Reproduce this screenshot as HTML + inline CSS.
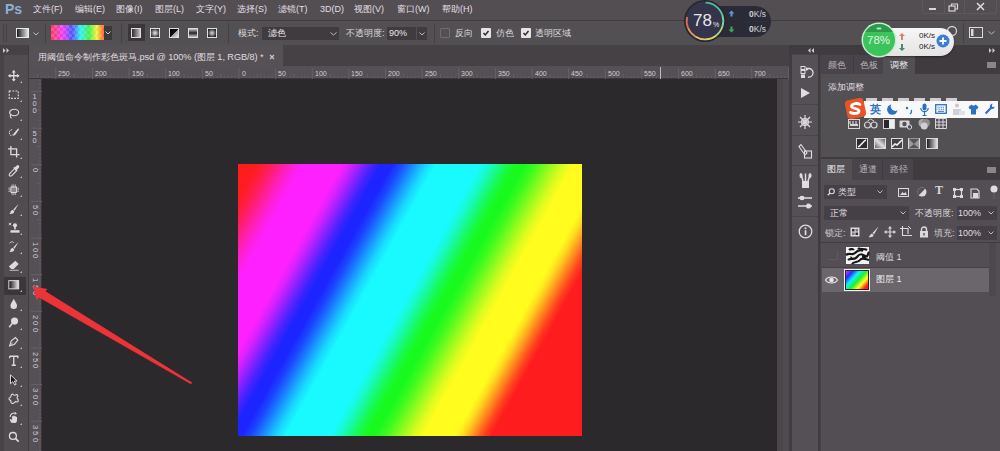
<!DOCTYPE html>
<html><head><meta charset="utf-8">
<style>
*{margin:0;padding:0;box-sizing:border-box}
html,body{width:1000px;height:451px;overflow:hidden;background:#514d51;font-family:"Liberation Sans",sans-serif;color:#e6e3e6;position:relative}
.a{position:absolute}
.t{position:absolute;white-space:nowrap;font-size:9px;line-height:11px;color:#dcd9dc}
svg.a{overflow:visible}
</style></head><body>
<div class="a" style="left:0px;top:0px;width:1000px;height:20px;background:#524e52;"></div>
<div class="a" style="left:0px;top:20px;width:1000px;height:1px;background:#3f3b3f;"></div>
<div class="a" style="left:0px;top:21px;width:1000px;height:24px;background:#535053;"></div>
<div class="a" style="left:0px;top:45px;width:29px;height:406px;background:#504c50;"></div>
<div class="a" style="left:29px;top:45px;width:761px;height:21px;background:#454145;"></div>
<div class="a" style="left:29px;top:45px;width:254px;height:21px;background:#555155;"></div>
<div class="a" style="left:29px;top:66px;width:760px;height:13px;background:#4f4b4f;"></div>
<div class="a" style="left:29px;top:79px;width:13px;height:372px;background:#4f4b4f;"></div>
<div class="a" style="left:42px;top:79px;width:735px;height:372px;background:#2c292d;"></div>
<div class="a" style="left:777px;top:79px;width:13px;height:372px;background:#4a464a;"></div>
<div class="a" style="left:783px;top:79px;width:6px;height:372px;background:#4f4b50;"></div>
<div class="a" style="left:789px;top:45px;width:211px;height:406px;background:#464246;"></div>
<span class="t" style="left:5px;top:2px;color:#8fb0d6;font-weight:bold;font-size:14px;line-height:15px">Ps</span>
<span class="t" style="left:33px;top:4px;color:#e2dfe2">文件(F)</span>
<span class="t" style="left:75px;top:4px;color:#e2dfe2">编辑(E)</span>
<span class="t" style="left:116px;top:4px;color:#e2dfe2">图像(I)</span>
<span class="t" style="left:155px;top:4px;color:#e2dfe2">图层(L)</span>
<span class="t" style="left:196px;top:4px;color:#e2dfe2">文字(Y)</span>
<span class="t" style="left:237px;top:4px;color:#e2dfe2">选择(S)</span>
<span class="t" style="left:278px;top:4px;color:#e2dfe2">滤镜(T)</span>
<span class="t" style="left:320px;top:4px;color:#e2dfe2">3D(D)</span>
<span class="t" style="left:354px;top:4px;color:#e2dfe2">视图(V)</span>
<span class="t" style="left:397px;top:4px;color:#e2dfe2">窗口(W)</span>
<span class="t" style="left:442px;top:4px;color:#e2dfe2">帮助(H)</span>
<div class="a" style="left:922px;top:0px;width:75px;height:14px;background:transparent;border:1px solid #5c585c;border-top:none;border-radius:0 0 3px 3px"></div>
<div class="a" style="left:944px;top:0px;width:1px;height:14px;background:#5c585c;"></div>
<div class="a" style="left:964px;top:0px;width:1px;height:14px;background:#5c585c;"></div>
<div class="a" style="left:929px;top:8px;width:7px;height:2px;background:#d8d5d8;"></div>
<svg class="a" style="left:948px;top:3px;" width="11" height="9" viewBox="0 0 11 9"><rect x="1" y="3" width="6" height="5" fill="none" stroke="#d8d5d8" stroke-width="1.2"/><path d="M3.5 3V1H9.5V6H7" fill="none" stroke="#d8d5d8" stroke-width="1.2"/></svg>
<svg class="a" style="left:976px;top:2px;" width="9" height="9" viewBox="0 0 9 9"><path d="M1 1L8 8M8 1L1 8" stroke="#dedbde" stroke-width="1.5"/></svg>
<div class="a" style="left:3px;top:24px;width:1px;height:18px;background:#444044;"></div>
<div class="a" style="left:6px;top:24px;width:1px;height:18px;background:#444044;"></div>
<svg class="a" style="left:16px;top:28px;" width="13" height="10" viewBox="0 0 13 10"><defs><linearGradient id="tg" x1="0" x2="1"><stop offset="0" stop-color="#111"/><stop offset="1" stop-color="#eee"/></linearGradient></defs><rect x="0.5" y="0.5" width="12" height="9" fill="url(#tg)" stroke="#e8e8e8" stroke-width="1"/></svg>
<svg class="a" style="left:33px;top:32px;" width="6" height="4" viewBox="0 0 6 4"><path d="M0.5 0.5L3 3L5.5 0.5" fill="none" stroke="#bdbabd" stroke-width="1"/></svg>
<div class="a" style="left:45px;top:23px;width:1px;height:20px;background:#444044;"></div>
<div class="a" style="left:51px;top:25px;width:53px;height:15px;background:repeating-conic-gradient(rgba(255,255,255,0.15) 0 25%,rgba(0,0,0,0) 0 50%) 0 0/6px 6px,linear-gradient(90deg,#ff3a5a 0%,#f040f0 22%,#5050ff 40%,#30f0f0 56%,#40f050 72%,#f0f040 86%,#ff5a2a 100%)"></div>
<div class="a" style="left:104px;top:26px;width:8px;height:14px;background:#3c383c;"></div>
<svg class="a" style="left:105px;top:31px;" width="6" height="4" viewBox="0 0 6 4"><path d="M0.5 0.5L3 3L5.5 0.5" fill="none" stroke="#cfcccf" stroke-width="1"/></svg>
<div class="a" style="left:121px;top:23px;width:1px;height:20px;background:#444044;"></div>
<div class="a" style="left:128px;top:24px;width:17px;height:17px;background:#3a363a;"></div>
<svg class="a" style="left:131px;top:28px;" width="10" height="10" viewBox="0 0 10 10"><defs><linearGradient id="b1" x1="0" x2="1"><stop offset="0" stop-color="#222"/><stop offset="1" stop-color="#ccc"/></linearGradient></defs><rect x="0.5" y="0.5" width="9" height="9" fill="url(#b1)" stroke="#e0dde0"/></svg>
<svg class="a" style="left:150px;top:28px;" width="10" height="10" viewBox="0 0 10 10"><defs><radialGradient id="b2"><stop offset="0" stop-color="#eee"/><stop offset="1" stop-color="#333"/></radialGradient></defs><rect x="0.5" y="0.5" width="9" height="9" fill="url(#b2)" stroke="#e0dde0"/></svg>
<svg class="a" style="left:169px;top:28px;" width="10" height="10" viewBox="0 0 10 10"><defs><linearGradient id="b3" x1="0" y1="0" x2="1" y2="1"><stop offset="0" stop-color="#000"/><stop offset="0.5" stop-color="#111"/><stop offset="0.51" stop-color="#999"/><stop offset="1" stop-color="#eee"/></linearGradient></defs><rect x="0.5" y="0.5" width="9" height="9" fill="url(#b3)" stroke="#e0dde0"/></svg>
<svg class="a" style="left:188px;top:28px;" width="10" height="10" viewBox="0 0 10 10"><defs><linearGradient id="b4" x1="0" y1="0" x2="0" y2="1"><stop offset="0" stop-color="#ddd"/><stop offset="0.5" stop-color="#222"/><stop offset="1" stop-color="#ddd"/></linearGradient></defs><rect x="0.5" y="0.5" width="9" height="9" fill="url(#b4)" stroke="#e0dde0"/></svg>
<svg class="a" style="left:207px;top:28px;" width="10" height="10" viewBox="0 0 10 10"><defs><radialGradient id="b5"><stop offset="0" stop-color="#ddd"/><stop offset="1" stop-color="#222"/></radialGradient></defs><rect x="0.5" y="0.5" width="9" height="9" fill="url(#b5)" stroke="#e0dde0"/></svg>
<div class="a" style="left:228px;top:23px;width:1px;height:20px;background:#444044;"></div>
<span class="t" style="left:238px;top:28px;">模式:</span>
<div class="a" style="left:262px;top:27px;width:77px;height:13px;background:#3f3b3f;"></div>
<span class="t" style="left:268px;top:28px;color:#e8e5e8">滤色</span>
<svg class="a" style="left:330px;top:32px;" width="7" height="4" viewBox="0 0 7 4"><path d="M0.5 0.5L3.5 3L6.5 0.5" fill="none" stroke="#bdbabd" stroke-width="1"/></svg>
<span class="t" style="left:346px;top:28px;">不透明度:</span>
<div class="a" style="left:387px;top:27px;width:29px;height:13px;background:#3f3b3f;"></div>
<span class="t" style="left:389px;top:28px;color:#e8e5e8">90%</span>
<div class="a" style="left:417px;top:27px;width:10px;height:13px;background:#3f3b3f;"></div>
<svg class="a" style="left:419px;top:32px;" width="6" height="4" viewBox="0 0 6 4"><path d="M0.5 0.5L3 3L5.5 0.5" fill="none" stroke="#bdbabd" stroke-width="1"/></svg>
<div class="a" style="left:434px;top:23px;width:1px;height:20px;background:#444044;"></div>
<div class="a" style="left:440px;top:28px;width:10px;height:10px;background:transparent;border:1px solid #6f6b6f;border-radius:1px"></div>
<span class="t" style="left:455px;top:28px;">反向</span>
<div class="a" style="left:481px;top:28px;width:10px;height:10px;background:#e6e3e6;border-radius:1px"></div>
<svg class="a" style="left:483px;top:30px;" width="6" height="6" viewBox="0 0 6 6"><path d="M0.5 3L2.3 5L5.5 1" fill="none" stroke="#2a272a" stroke-width="1.4"/></svg>
<div class="a" style="left:521px;top:28px;width:10px;height:10px;background:#e6e3e6;border-radius:1px"></div>
<svg class="a" style="left:523px;top:30px;" width="6" height="6" viewBox="0 0 6 6"><path d="M0.5 3L2.3 5L5.5 1" fill="none" stroke="#2a272a" stroke-width="1.4"/></svg>
<span class="t" style="left:496px;top:28px;">仿色</span>
<span class="t" style="left:535px;top:28px;">透明区域</span>
<svg class="a" style="left:946px;top:25px;" width="12" height="12" viewBox="0 0 12 12"><circle cx="6" cy="6" r="4.5" fill="none" stroke="#cfcccf" stroke-width="1.3"/></svg>
<div class="a" style="left:963px;top:23px;width:1px;height:20px;background:#444044;"></div>
<svg class="a" style="left:969px;top:27px;" width="14" height="11" viewBox="0 0 14 11"><rect x="0.5" y="0.5" width="13" height="10" fill="none" stroke="#dcd9dc"/><rect x="2" y="2" width="2.5" height="7" fill="#dcd9dc"/></svg>
<svg class="a" style="left:988px;top:31px;" width="7" height="4" viewBox="0 0 7 4"><path d="M0.5 0.5L3.5 3L6.5 0.5" fill="none" stroke="#bdbabd" stroke-width="1"/></svg>
<svg class="a" style="left:238px;top:164px;" width="344" height="272" viewBox="0 0 344 272"><defs><linearGradient id="g1" gradientUnits="userSpaceOnUse" x1="0" y1="0" x2="319.8" y2="177.2"><stop offset="0.0000" stop-color="#ff1c1e"/><stop offset="0.0431" stop-color="#ff1c1e"/><stop offset="0.0660" stop-color="#ff1d40"/><stop offset="0.0833" stop-color="#ff1d65"/><stop offset="0.1005" stop-color="#ff1e8e"/><stop offset="0.1177" stop-color="#ff1fb8"/><stop offset="0.1349" stop-color="#ff1fdd"/><stop offset="0.1579" stop-color="#ff20ff"/><stop offset="0.2488" stop-color="#ff20ff"/><stop offset="0.2679" stop-color="#dc21ff"/><stop offset="0.2823" stop-color="#b721ff"/><stop offset="0.2967" stop-color="#8e22ff"/><stop offset="0.3110" stop-color="#6423ff"/><stop offset="0.3254" stop-color="#3f23ff"/><stop offset="0.3445" stop-color="#1c24ff"/><stop offset="0.3684" stop-color="#1c24ff"/><stop offset="0.3895" stop-color="#1b45ff"/><stop offset="0.4053" stop-color="#1b68ff"/><stop offset="0.4211" stop-color="#1a8fff"/><stop offset="0.4368" stop-color="#19b6ff"/><stop offset="0.4526" stop-color="#19d9ff"/><stop offset="0.4737" stop-color="#18faff"/><stop offset="0.5789" stop-color="#18faff"/><stop offset="0.5967" stop-color="#18fadd"/><stop offset="0.6099" stop-color="#18fab8"/><stop offset="0.6232" stop-color="#18fa8e"/><stop offset="0.6365" stop-color="#18fa65"/><stop offset="0.6498" stop-color="#18fa40"/><stop offset="0.6675" stop-color="#18fa1e"/><stop offset="0.6866" stop-color="#18fa1e"/><stop offset="0.7100" stop-color="#3bfa1e"/><stop offset="0.7276" stop-color="#61fb1e"/><stop offset="0.7452" stop-color="#8cfb1e"/><stop offset="0.7628" stop-color="#b6fb1e"/><stop offset="0.7804" stop-color="#dcfc1e"/><stop offset="0.8038" stop-color="#fffc1e"/><stop offset="0.8804" stop-color="#fffc1e"/><stop offset="0.8976" stop-color="#ffda1e"/><stop offset="0.9105" stop-color="#ffb51e"/><stop offset="0.9234" stop-color="#ff8c1e"/><stop offset="0.9364" stop-color="#ff631e"/><stop offset="0.9493" stop-color="#ff3e1e"/><stop offset="0.9665" stop-color="#ff1c1e"/></linearGradient></defs><rect width="344" height="272" fill="url(#g1)"/></svg>
<div class="a" style="left:0px;top:45px;width:29px;height:10px;background:#454145;"></div>
<div class="a" style="left:0px;top:55px;width:4px;height:396px;background:#474347;"></div>
<svg class="a" style="left:3px;top:48px;" width="7" height="5" viewBox="0 0 7 5"><path d="M0 0L2.5 2.5L0 5ZM3.5 0L6 2.5L3.5 5Z" fill="#cfcccf"/></svg>
<div class="a" style="left:28px;top:45px;width:1px;height:406px;background:#403c40;"></div>
<div class="a" style="left:4px;top:277px;width:22px;height:18px;background:#3a363a;"></div>
<svg class="a" style="left:8px;top:70px;transform:scale(0.82);transform-origin:0 0" width="14" height="14" viewBox="0 0 14 14"><path d="M7 1V13M1 7H13" stroke="#dedbde" stroke-width="1.6"/><path d="M7 0L4.5 3H9.5ZM7 14L4.5 11H9.5ZM0 7L3 4.5V9.5ZM14 7L11 4.5V9.5Z" fill="#dedbde"/></svg>
<svg class="a" style="left:20px;top:81px;" width="2" height="2" viewBox="0 0 2 2"><path d="M2 0V2H0Z" fill="#bdbabd"/></svg>
<svg class="a" style="left:8px;top:89px;transform:scale(0.82);transform-origin:0 0" width="14" height="14" viewBox="0 0 14 14"><rect x="1.5" y="2.5" width="11" height="9" fill="none" stroke="#dedbde" stroke-width="1.4" stroke-dasharray="2.2 1.6"/></svg>
<svg class="a" style="left:20px;top:100px;" width="2" height="2" viewBox="0 0 2 2"><path d="M2 0V2H0Z" fill="#bdbabd"/></svg>
<svg class="a" style="left:8px;top:108px;transform:scale(0.82);transform-origin:0 0" width="14" height="14" viewBox="0 0 14 14"><ellipse cx="7.5" cy="5.5" rx="5.5" ry="4" fill="none" stroke="#dedbde" stroke-width="1.4"/><path d="M3.5 8.5C2 10 3 12 4.5 12.5" fill="none" stroke="#dedbde" stroke-width="1.3"/></svg>
<svg class="a" style="left:20px;top:119px;" width="2" height="2" viewBox="0 0 2 2"><path d="M2 0V2H0Z" fill="#bdbabd"/></svg>
<svg class="a" style="left:8px;top:127px;transform:scale(0.82);transform-origin:0 0" width="14" height="14" viewBox="0 0 14 14"><path d="M5 3.5C2 3 1 6 2 9C3 11 5 11 6 9" fill="none" stroke="#dedbde" stroke-width="1.2" stroke-dasharray="1.8 1"/><path d="M12.5 1.5L7 8L6 11L9 9.5L13.5 3Z" fill="#dedbde"/></svg>
<svg class="a" style="left:20px;top:138px;" width="2" height="2" viewBox="0 0 2 2"><path d="M2 0V2H0Z" fill="#bdbabd"/></svg>
<svg class="a" style="left:8px;top:146px;transform:scale(0.82);transform-origin:0 0" width="14" height="14" viewBox="0 0 14 14"><path d="M3.5 0V10.5H14M0 3.5H10.5V14" fill="none" stroke="#dedbde" stroke-width="1.6"/></svg>
<svg class="a" style="left:20px;top:157px;" width="2" height="2" viewBox="0 0 2 2"><path d="M2 0V2H0Z" fill="#bdbabd"/></svg>
<svg class="a" style="left:8px;top:165px;transform:scale(0.82);transform-origin:0 0" width="14" height="14" viewBox="0 0 14 14"><path d="M2.5 13.5L1.5 12.5L2 10.5L8 4.5L10.5 7L4.5 13Z" fill="none" stroke="#dedbde" stroke-width="1.3"/><path d="M7.5 3.5L10.5 0.8A1.8 1.8 0 0 1 13.2 3.5L10.5 6.5Z" fill="#dedbde"/><path d="M7 3L11 7" stroke="#dedbde" stroke-width="1.6"/></svg>
<svg class="a" style="left:20px;top:176px;" width="2" height="2" viewBox="0 0 2 2"><path d="M2 0V2H0Z" fill="#bdbabd"/></svg>
<svg class="a" style="left:8px;top:184px;transform:scale(0.82);transform-origin:0 0" width="14" height="14" viewBox="0 0 14 14"><rect x="3.5" y="3.5" width="7" height="7" rx="1" fill="#8a868a" stroke="#dedbde" stroke-width="1.3"/><path d="M5 0.5V2.5M7 0.5V2.5M9 0.5V2.5M5 11.5V13.5M7 11.5V13.5M9 11.5V13.5M0.5 5H2.5M0.5 7H2.5M0.5 9H2.5M11.5 5H13.5M11.5 7H13.5M11.5 9H13.5" stroke="#dedbde" stroke-width="0.9"/></svg>
<svg class="a" style="left:20px;top:195px;" width="2" height="2" viewBox="0 0 2 2"><path d="M2 0V2H0Z" fill="#bdbabd"/></svg>
<svg class="a" style="left:8px;top:203px;transform:scale(0.82);transform-origin:0 0" width="14" height="14" viewBox="0 0 14 14"><path d="M13 1L6.5 8L8 9.5Z" fill="#dedbde"/><path d="M6 8.5C4 8.5 3 10 3 11.5C3 12.5 2 13 1 13C4 14 8 13 7.5 10Z" fill="#dedbde"/></svg>
<svg class="a" style="left:20px;top:214px;" width="2" height="2" viewBox="0 0 2 2"><path d="M2 0V2H0Z" fill="#bdbabd"/></svg>
<svg class="a" style="left:8px;top:222px;transform:scale(0.82);transform-origin:0 0" width="14" height="14" viewBox="0 0 14 14"><path d="M1 1L4 4M4 1L1 4" stroke="#dedbde" stroke-width="1.1"/><circle cx="8.5" cy="4" r="2.5" fill="#dedbde"/><rect x="7.5" y="5" width="2" height="4" fill="#dedbde"/><path d="M3 10H14V13H3Z" fill="#dedbde"/></svg>
<svg class="a" style="left:20px;top:233px;" width="2" height="2" viewBox="0 0 2 2"><path d="M2 0V2H0Z" fill="#bdbabd"/></svg>
<svg class="a" style="left:8px;top:241px;transform:scale(0.82);transform-origin:0 0" width="14" height="14" viewBox="0 0 14 14"><path d="M13 1L6.5 8L8 9.5Z" fill="#dedbde"/><path d="M6 8.5C4 8.5 3 10 3 11.5C3 12.5 2 13 1 13C4 14 8 13 7.5 10Z" fill="#dedbde"/><path d="M2 3A3 3 0 0 1 7 2" fill="none" stroke="#dedbde" stroke-width="1.1"/></svg>
<svg class="a" style="left:20px;top:252px;" width="2" height="2" viewBox="0 0 2 2"><path d="M2 0V2H0Z" fill="#bdbabd"/></svg>
<svg class="a" style="left:8px;top:260px;transform:scale(0.82);transform-origin:0 0" width="14" height="14" viewBox="0 0 14 14"><path d="M9 1L13 5L7 11H4L1 8Z" fill="#dedbde"/><path d="M2 12.5H13" stroke="#dedbde" stroke-width="1"/></svg>
<svg class="a" style="left:20px;top:271px;" width="2" height="2" viewBox="0 0 2 2"><path d="M2 0V2H0Z" fill="#bdbabd"/></svg>
<svg class="a" style="left:8px;top:279px;transform:scale(0.82);transform-origin:0 0" width="14" height="14" viewBox="0 0 14 14"><defs><linearGradient id="tgg" x1="0" x2="1"><stop offset="0" stop-color="#111"/><stop offset="1" stop-color="#eee"/></linearGradient></defs><rect x="1" y="2" width="12" height="10" fill="url(#tgg)" stroke="#dedbde" stroke-width="1.2"/></svg>
<svg class="a" style="left:20px;top:290px;" width="2" height="2" viewBox="0 0 2 2"><path d="M2 0V2H0Z" fill="#bdbabd"/></svg>
<svg class="a" style="left:8px;top:298px;transform:scale(0.82);transform-origin:0 0" width="14" height="14" viewBox="0 0 14 14"><path d="M7 1C5 5 3 7 3 9.5A4 4 0 0 0 11 9.5C11 7 9 5 7 1Z" fill="#dedbde"/></svg>
<svg class="a" style="left:20px;top:309px;" width="2" height="2" viewBox="0 0 2 2"><path d="M2 0V2H0Z" fill="#bdbabd"/></svg>
<svg class="a" style="left:8px;top:317px;transform:scale(0.82);transform-origin:0 0" width="14" height="14" viewBox="0 0 14 14"><circle cx="8" cy="5" r="4.3" fill="#dedbde"/><path d="M5 8L1.5 12.5" stroke="#dedbde" stroke-width="1.8"/></svg>
<svg class="a" style="left:20px;top:328px;" width="2" height="2" viewBox="0 0 2 2"><path d="M2 0V2H0Z" fill="#bdbabd"/></svg>
<svg class="a" style="left:8px;top:336px;transform:scale(0.82);transform-origin:0 0" width="14" height="14" viewBox="0 0 14 14"><path d="M2 12L4 6L9 2L12 5L8 10Z" fill="none" stroke="#dedbde" stroke-width="1.4"/><path d="M2 12L6 8" stroke="#dedbde" stroke-width="1"/></svg>
<svg class="a" style="left:20px;top:347px;" width="2" height="2" viewBox="0 0 2 2"><path d="M2 0V2H0Z" fill="#bdbabd"/></svg>
<svg class="a" style="left:8px;top:355px;transform:scale(0.82);transform-origin:0 0" width="14" height="14" viewBox="0 0 14 14"><path d="M2 1.5H12V4M7 1.5V12.5M4.5 12.5H9.5M2 1.5V4" fill="none" stroke="#dedbde" stroke-width="1.6"/></svg>
<svg class="a" style="left:20px;top:366px;" width="2" height="2" viewBox="0 0 2 2"><path d="M2 0V2H0Z" fill="#bdbabd"/></svg>
<svg class="a" style="left:8px;top:374px;transform:scale(0.82);transform-origin:0 0" width="14" height="14" viewBox="0 0 14 14"><path d="M3 1V12L5.8 9.3L8.3 13.5L10 12.5L7.6 8.6H11Z" fill="#1a181a" stroke="#dedbde" stroke-width="1.2" stroke-linejoin="round"/></svg>
<svg class="a" style="left:20px;top:385px;" width="2" height="2" viewBox="0 0 2 2"><path d="M2 0V2H0Z" fill="#bdbabd"/></svg>
<svg class="a" style="left:8px;top:393px;transform:scale(0.82);transform-origin:0 0" width="14" height="14" viewBox="0 0 14 14"><path d="M6 1.5C7 3 8.5 3 10 2C12 1.5 12.5 4 11 5.5C10.5 6.5 13 7.5 12.5 9.5C12 11.5 10 11 9 10.5C8 12.5 5.5 13.5 4 12C3 11 4 9.5 3 9C1 8.5 0.5 6 2.5 5.5C4 5 3.5 3.5 4 2.5C4.5 1.5 5.5 1 6 1.5Z" fill="none" stroke="#dedbde" stroke-width="1.4"/></svg>
<svg class="a" style="left:20px;top:404px;" width="2" height="2" viewBox="0 0 2 2"><path d="M2 0V2H0Z" fill="#bdbabd"/></svg>
<svg class="a" style="left:8px;top:412px;transform:scale(0.82);transform-origin:0 0" width="14" height="14" viewBox="0 0 14 14"><path d="M2.5 6A5 5 0 0 1 9 1.5" fill="none" stroke="#dedbde" stroke-width="1.3"/><path d="M8.5 0L11 2L8 3.5Z" fill="#dedbde"/><path d="M4 13C2.5 11 2 9 3 8.5C4 8 4.5 9.5 5 10V5.5C5 4.5 6.5 4.5 6.5 5.5V8V5C6.5 4 8 4 8 5V8V5.5C8 4.5 9.5 4.5 9.5 5.5V8.5V6.5C9.5 5.5 11 5.5 11 6.5V10C11 12 10 13 9 13.5Z" fill="#dedbde"/></svg>
<svg class="a" style="left:20px;top:423px;" width="2" height="2" viewBox="0 0 2 2"><path d="M2 0V2H0Z" fill="#bdbabd"/></svg>
<svg class="a" style="left:8px;top:431px;transform:scale(0.82);transform-origin:0 0" width="14" height="14" viewBox="0 0 14 14"><circle cx="6" cy="6" r="4.2" fill="none" stroke="#dedbde" stroke-width="1.6"/><path d="M9 9L13 13" stroke="#dedbde" stroke-width="2"/></svg>
<span class="t" style="left:38px;top:52px;color:#e0dde0;font-size:9.2px">用阈值命令制作彩色斑马<span style="letter-spacing:-0.08px">.psd @ 100% (</span>图层<span style="letter-spacing:-0.08px"> 1, RGB/8) *</span></span>
<svg class="a" style="left:269px;top:54px;" width="6" height="6" viewBox="0 0 6 6"><path d="M1 1L5 5M5 1L1 5" stroke="#c8c5c8" stroke-width="1.3"/></svg>
<div class="a" style="left:29px;top:66px;width:760px;height:13px;background:#545055;"></div>
<div class="a" style="left:29px;top:78px;width:760px;height:1px;background:#3a363a;"></div>
<svg class="a" style="left:29px;top:66px;" width="760" height="13" viewBox="0 0 760 13"><rect x="0.7" y="10" width="1" height="2" fill="#646064"/><rect x="4.4" y="10" width="1" height="2" fill="#646064"/><rect x="8.0" y="8" width="1" height="4" fill="#646064"/><rect x="11.7" y="10" width="1" height="2" fill="#646064"/><rect x="15.4" y="10" width="1" height="2" fill="#646064"/><rect x="19.0" y="10" width="1" height="2" fill="#646064"/><rect x="22.7" y="10" width="1" height="2" fill="#646064"/><rect x="26.3" y="2" width="1" height="11" fill="#656165"/><rect x="30.0" y="10" width="1" height="2" fill="#646064"/><rect x="33.7" y="10" width="1" height="2" fill="#646064"/><rect x="37.3" y="10" width="1" height="2" fill="#646064"/><rect x="41.0" y="10" width="1" height="2" fill="#646064"/><rect x="44.7" y="8" width="1" height="4" fill="#646064"/><rect x="48.3" y="10" width="1" height="2" fill="#646064"/><rect x="52.0" y="10" width="1" height="2" fill="#646064"/><rect x="55.7" y="10" width="1" height="2" fill="#646064"/><rect x="59.3" y="10" width="1" height="2" fill="#646064"/><rect x="63.0" y="2" width="1" height="11" fill="#656165"/><rect x="66.6" y="10" width="1" height="2" fill="#646064"/><rect x="70.3" y="10" width="1" height="2" fill="#646064"/><rect x="74.0" y="10" width="1" height="2" fill="#646064"/><rect x="77.6" y="10" width="1" height="2" fill="#646064"/><rect x="81.3" y="8" width="1" height="4" fill="#646064"/><rect x="85.0" y="10" width="1" height="2" fill="#646064"/><rect x="88.6" y="10" width="1" height="2" fill="#646064"/><rect x="92.3" y="10" width="1" height="2" fill="#646064"/><rect x="95.9" y="10" width="1" height="2" fill="#646064"/><rect x="99.6" y="2" width="1" height="11" fill="#656165"/><rect x="103.3" y="10" width="1" height="2" fill="#646064"/><rect x="106.9" y="10" width="1" height="2" fill="#646064"/><rect x="110.6" y="10" width="1" height="2" fill="#646064"/><rect x="114.3" y="10" width="1" height="2" fill="#646064"/><rect x="117.9" y="8" width="1" height="4" fill="#646064"/><rect x="121.6" y="10" width="1" height="2" fill="#646064"/><rect x="125.3" y="10" width="1" height="2" fill="#646064"/><rect x="128.9" y="10" width="1" height="2" fill="#646064"/><rect x="132.6" y="10" width="1" height="2" fill="#646064"/><rect x="136.2" y="2" width="1" height="11" fill="#656165"/><rect x="139.9" y="10" width="1" height="2" fill="#646064"/><rect x="143.6" y="10" width="1" height="2" fill="#646064"/><rect x="147.2" y="10" width="1" height="2" fill="#646064"/><rect x="150.9" y="10" width="1" height="2" fill="#646064"/><rect x="154.6" y="8" width="1" height="4" fill="#646064"/><rect x="158.2" y="10" width="1" height="2" fill="#646064"/><rect x="161.9" y="10" width="1" height="2" fill="#646064"/><rect x="165.5" y="10" width="1" height="2" fill="#646064"/><rect x="169.2" y="10" width="1" height="2" fill="#646064"/><rect x="172.9" y="2" width="1" height="11" fill="#656165"/><rect x="176.5" y="10" width="1" height="2" fill="#646064"/><rect x="180.2" y="10" width="1" height="2" fill="#646064"/><rect x="183.9" y="10" width="1" height="2" fill="#646064"/><rect x="187.5" y="10" width="1" height="2" fill="#646064"/><rect x="191.2" y="8" width="1" height="4" fill="#646064"/><rect x="194.8" y="10" width="1" height="2" fill="#646064"/><rect x="198.5" y="10" width="1" height="2" fill="#646064"/><rect x="202.2" y="10" width="1" height="2" fill="#646064"/><rect x="205.8" y="10" width="1" height="2" fill="#646064"/><rect x="209.5" y="2" width="1" height="11" fill="#656165"/><rect x="213.2" y="10" width="1" height="2" fill="#646064"/><rect x="216.8" y="10" width="1" height="2" fill="#646064"/><rect x="220.5" y="10" width="1" height="2" fill="#646064"/><rect x="224.2" y="10" width="1" height="2" fill="#646064"/><rect x="227.8" y="8" width="1" height="4" fill="#646064"/><rect x="231.5" y="10" width="1" height="2" fill="#646064"/><rect x="235.1" y="10" width="1" height="2" fill="#646064"/><rect x="238.8" y="10" width="1" height="2" fill="#646064"/><rect x="242.5" y="10" width="1" height="2" fill="#646064"/><rect x="246.1" y="2" width="1" height="11" fill="#656165"/><rect x="249.8" y="10" width="1" height="2" fill="#646064"/><rect x="253.5" y="10" width="1" height="2" fill="#646064"/><rect x="257.1" y="10" width="1" height="2" fill="#646064"/><rect x="260.8" y="10" width="1" height="2" fill="#646064"/><rect x="264.4" y="8" width="1" height="4" fill="#646064"/><rect x="268.1" y="10" width="1" height="2" fill="#646064"/><rect x="271.8" y="10" width="1" height="2" fill="#646064"/><rect x="275.4" y="10" width="1" height="2" fill="#646064"/><rect x="279.1" y="10" width="1" height="2" fill="#646064"/><rect x="282.8" y="2" width="1" height="11" fill="#656165"/><rect x="286.4" y="10" width="1" height="2" fill="#646064"/><rect x="290.1" y="10" width="1" height="2" fill="#646064"/><rect x="293.7" y="10" width="1" height="2" fill="#646064"/><rect x="297.4" y="10" width="1" height="2" fill="#646064"/><rect x="301.1" y="8" width="1" height="4" fill="#646064"/><rect x="304.7" y="10" width="1" height="2" fill="#646064"/><rect x="308.4" y="10" width="1" height="2" fill="#646064"/><rect x="312.1" y="10" width="1" height="2" fill="#646064"/><rect x="315.7" y="10" width="1" height="2" fill="#646064"/><rect x="319.4" y="2" width="1" height="11" fill="#656165"/><rect x="323.1" y="10" width="1" height="2" fill="#646064"/><rect x="326.7" y="10" width="1" height="2" fill="#646064"/><rect x="330.4" y="10" width="1" height="2" fill="#646064"/><rect x="334.0" y="10" width="1" height="2" fill="#646064"/><rect x="337.7" y="8" width="1" height="4" fill="#646064"/><rect x="341.4" y="10" width="1" height="2" fill="#646064"/><rect x="345.0" y="10" width="1" height="2" fill="#646064"/><rect x="348.7" y="10" width="1" height="2" fill="#646064"/><rect x="352.4" y="10" width="1" height="2" fill="#646064"/><rect x="356.0" y="2" width="1" height="11" fill="#656165"/><rect x="359.7" y="10" width="1" height="2" fill="#646064"/><rect x="363.3" y="10" width="1" height="2" fill="#646064"/><rect x="367.0" y="10" width="1" height="2" fill="#646064"/><rect x="370.7" y="10" width="1" height="2" fill="#646064"/><rect x="374.3" y="8" width="1" height="4" fill="#646064"/><rect x="378.0" y="10" width="1" height="2" fill="#646064"/><rect x="381.7" y="10" width="1" height="2" fill="#646064"/><rect x="385.3" y="10" width="1" height="2" fill="#646064"/><rect x="389.0" y="10" width="1" height="2" fill="#646064"/><rect x="392.6" y="2" width="1" height="11" fill="#656165"/><rect x="396.3" y="10" width="1" height="2" fill="#646064"/><rect x="400.0" y="10" width="1" height="2" fill="#646064"/><rect x="403.6" y="10" width="1" height="2" fill="#646064"/><rect x="407.3" y="10" width="1" height="2" fill="#646064"/><rect x="411.0" y="8" width="1" height="4" fill="#646064"/><rect x="414.6" y="10" width="1" height="2" fill="#646064"/><rect x="418.3" y="10" width="1" height="2" fill="#646064"/><rect x="422.0" y="10" width="1" height="2" fill="#646064"/><rect x="425.6" y="10" width="1" height="2" fill="#646064"/><rect x="429.3" y="2" width="1" height="11" fill="#656165"/><rect x="432.9" y="10" width="1" height="2" fill="#646064"/><rect x="436.6" y="10" width="1" height="2" fill="#646064"/><rect x="440.3" y="10" width="1" height="2" fill="#646064"/><rect x="443.9" y="10" width="1" height="2" fill="#646064"/><rect x="447.6" y="8" width="1" height="4" fill="#646064"/><rect x="451.3" y="10" width="1" height="2" fill="#646064"/><rect x="454.9" y="10" width="1" height="2" fill="#646064"/><rect x="458.6" y="10" width="1" height="2" fill="#646064"/><rect x="462.2" y="10" width="1" height="2" fill="#646064"/><rect x="465.9" y="2" width="1" height="11" fill="#656165"/><rect x="469.6" y="10" width="1" height="2" fill="#646064"/><rect x="473.2" y="10" width="1" height="2" fill="#646064"/><rect x="476.9" y="10" width="1" height="2" fill="#646064"/><rect x="480.6" y="10" width="1" height="2" fill="#646064"/><rect x="484.2" y="8" width="1" height="4" fill="#646064"/><rect x="487.9" y="10" width="1" height="2" fill="#646064"/><rect x="491.6" y="10" width="1" height="2" fill="#646064"/><rect x="495.2" y="10" width="1" height="2" fill="#646064"/><rect x="498.9" y="10" width="1" height="2" fill="#646064"/><rect x="502.5" y="2" width="1" height="11" fill="#656165"/><rect x="506.2" y="10" width="1" height="2" fill="#646064"/><rect x="509.9" y="10" width="1" height="2" fill="#646064"/><rect x="513.5" y="10" width="1" height="2" fill="#646064"/><rect x="517.2" y="10" width="1" height="2" fill="#646064"/><rect x="520.9" y="8" width="1" height="4" fill="#646064"/><rect x="524.5" y="10" width="1" height="2" fill="#646064"/><rect x="528.2" y="10" width="1" height="2" fill="#646064"/><rect x="531.8" y="10" width="1" height="2" fill="#646064"/><rect x="535.5" y="10" width="1" height="2" fill="#646064"/><rect x="539.2" y="2" width="1" height="11" fill="#656165"/><rect x="542.8" y="10" width="1" height="2" fill="#646064"/><rect x="546.5" y="10" width="1" height="2" fill="#646064"/><rect x="550.2" y="10" width="1" height="2" fill="#646064"/><rect x="553.8" y="10" width="1" height="2" fill="#646064"/><rect x="557.5" y="8" width="1" height="4" fill="#646064"/><rect x="561.1" y="10" width="1" height="2" fill="#646064"/><rect x="564.8" y="10" width="1" height="2" fill="#646064"/><rect x="568.5" y="10" width="1" height="2" fill="#646064"/><rect x="572.1" y="10" width="1" height="2" fill="#646064"/><rect x="575.8" y="2" width="1" height="11" fill="#656165"/><rect x="579.5" y="10" width="1" height="2" fill="#646064"/><rect x="583.1" y="10" width="1" height="2" fill="#646064"/><rect x="586.8" y="10" width="1" height="2" fill="#646064"/><rect x="590.5" y="10" width="1" height="2" fill="#646064"/><rect x="594.1" y="8" width="1" height="4" fill="#646064"/><rect x="597.8" y="10" width="1" height="2" fill="#646064"/><rect x="601.4" y="10" width="1" height="2" fill="#646064"/><rect x="605.1" y="10" width="1" height="2" fill="#646064"/><rect x="608.8" y="10" width="1" height="2" fill="#646064"/><rect x="612.4" y="2" width="1" height="11" fill="#656165"/><rect x="616.1" y="10" width="1" height="2" fill="#646064"/><rect x="619.8" y="10" width="1" height="2" fill="#646064"/><rect x="623.4" y="10" width="1" height="2" fill="#646064"/><rect x="627.1" y="10" width="1" height="2" fill="#646064"/><rect x="630.7" y="8" width="1" height="4" fill="#646064"/><rect x="634.4" y="10" width="1" height="2" fill="#646064"/><rect x="638.1" y="10" width="1" height="2" fill="#646064"/><rect x="641.7" y="10" width="1" height="2" fill="#646064"/><rect x="645.4" y="10" width="1" height="2" fill="#646064"/><rect x="649.1" y="2" width="1" height="11" fill="#656165"/><rect x="652.7" y="10" width="1" height="2" fill="#646064"/><rect x="656.4" y="10" width="1" height="2" fill="#646064"/><rect x="660.0" y="10" width="1" height="2" fill="#646064"/><rect x="663.7" y="10" width="1" height="2" fill="#646064"/><rect x="667.4" y="8" width="1" height="4" fill="#646064"/><rect x="671.0" y="10" width="1" height="2" fill="#646064"/><rect x="674.7" y="10" width="1" height="2" fill="#646064"/><rect x="678.4" y="10" width="1" height="2" fill="#646064"/><rect x="682.0" y="10" width="1" height="2" fill="#646064"/><rect x="685.7" y="2" width="1" height="11" fill="#656165"/><rect x="689.4" y="10" width="1" height="2" fill="#646064"/><rect x="693.0" y="10" width="1" height="2" fill="#646064"/><rect x="696.7" y="10" width="1" height="2" fill="#646064"/><rect x="700.3" y="10" width="1" height="2" fill="#646064"/><rect x="704.0" y="8" width="1" height="4" fill="#646064"/><rect x="707.7" y="10" width="1" height="2" fill="#646064"/><rect x="711.3" y="10" width="1" height="2" fill="#646064"/><rect x="715.0" y="10" width="1" height="2" fill="#646064"/><rect x="718.7" y="10" width="1" height="2" fill="#646064"/><rect x="722.3" y="2" width="1" height="11" fill="#656165"/><rect x="726.0" y="10" width="1" height="2" fill="#646064"/><rect x="729.6" y="10" width="1" height="2" fill="#646064"/><rect x="733.3" y="10" width="1" height="2" fill="#646064"/><rect x="737.0" y="10" width="1" height="2" fill="#646064"/><rect x="740.6" y="8" width="1" height="4" fill="#646064"/><rect x="744.3" y="10" width="1" height="2" fill="#646064"/><rect x="748.0" y="10" width="1" height="2" fill="#646064"/><rect x="751.6" y="10" width="1" height="2" fill="#646064"/><rect x="755.3" y="10" width="1" height="2" fill="#646064"/><rect x="759.0" y="2" width="1" height="11" fill="#656165"/></svg>
<span class="t" style="left:58px;top:70px;font-size:7px;line-height:8px;color:#cfcccf">250</span>
<span class="t" style="left:95px;top:70px;font-size:7px;line-height:8px;color:#cfcccf">200</span>
<span class="t" style="left:132px;top:70px;font-size:7px;line-height:8px;color:#cfcccf">150</span>
<span class="t" style="left:168px;top:70px;font-size:7px;line-height:8px;color:#cfcccf">100</span>
<span class="t" style="left:205px;top:70px;font-size:7px;line-height:8px;color:#cfcccf">50</span>
<span class="t" style="left:242px;top:70px;font-size:7px;line-height:8px;color:#cfcccf">0</span>
<span class="t" style="left:278px;top:70px;font-size:7px;line-height:8px;color:#cfcccf">50</span>
<span class="t" style="left:315px;top:70px;font-size:7px;line-height:8px;color:#cfcccf">100</span>
<span class="t" style="left:351px;top:70px;font-size:7px;line-height:8px;color:#cfcccf">150</span>
<span class="t" style="left:388px;top:70px;font-size:7px;line-height:8px;color:#cfcccf">200</span>
<span class="t" style="left:425px;top:70px;font-size:7px;line-height:8px;color:#cfcccf">250</span>
<span class="t" style="left:461px;top:70px;font-size:7px;line-height:8px;color:#cfcccf">300</span>
<span class="t" style="left:498px;top:70px;font-size:7px;line-height:8px;color:#cfcccf">350</span>
<span class="t" style="left:535px;top:70px;font-size:7px;line-height:8px;color:#cfcccf">400</span>
<span class="t" style="left:571px;top:70px;font-size:7px;line-height:8px;color:#cfcccf">450</span>
<span class="t" style="left:608px;top:70px;font-size:7px;line-height:8px;color:#cfcccf">500</span>
<span class="t" style="left:644px;top:70px;font-size:7px;line-height:8px;color:#cfcccf">550</span>
<span class="t" style="left:681px;top:70px;font-size:7px;line-height:8px;color:#cfcccf">600</span>
<span class="t" style="left:718px;top:70px;font-size:7px;line-height:8px;color:#cfcccf">650</span>
<span class="t" style="left:754px;top:70px;font-size:7px;line-height:8px;color:#cfcccf">700</span>
<div class="a" style="left:29px;top:79px;width:13px;height:372px;background:#545055;"></div>
<div class="a" style="left:41px;top:79px;width:1px;height:372px;background:#3a363a;"></div>
<svg class="a" style="left:29px;top:79px;" width="13" height="372" viewBox="0 0 13 372"><rect x="10" y="1.1" width="2" height="1" fill="#646064"/><rect x="10" y="4.7" width="2" height="1" fill="#646064"/><rect x="10" y="8.4" width="2" height="1" fill="#646064"/><rect x="2" y="12.0" width="11" height="1" fill="#656165"/><rect x="10" y="15.7" width="2" height="1" fill="#646064"/><rect x="10" y="19.4" width="2" height="1" fill="#646064"/><rect x="10" y="23.0" width="2" height="1" fill="#646064"/><rect x="10" y="26.7" width="2" height="1" fill="#646064"/><rect x="8" y="30.4" width="4" height="1" fill="#646064"/><rect x="10" y="34.0" width="2" height="1" fill="#646064"/><rect x="10" y="37.7" width="2" height="1" fill="#646064"/><rect x="10" y="41.3" width="2" height="1" fill="#646064"/><rect x="10" y="45.0" width="2" height="1" fill="#646064"/><rect x="2" y="48.7" width="11" height="1" fill="#656165"/><rect x="10" y="52.3" width="2" height="1" fill="#646064"/><rect x="10" y="56.0" width="2" height="1" fill="#646064"/><rect x="10" y="59.7" width="2" height="1" fill="#646064"/><rect x="10" y="63.3" width="2" height="1" fill="#646064"/><rect x="8" y="67.0" width="4" height="1" fill="#646064"/><rect x="10" y="70.6" width="2" height="1" fill="#646064"/><rect x="10" y="74.3" width="2" height="1" fill="#646064"/><rect x="10" y="78.0" width="2" height="1" fill="#646064"/><rect x="10" y="81.6" width="2" height="1" fill="#646064"/><rect x="2" y="85.3" width="11" height="1" fill="#656165"/><rect x="10" y="89.0" width="2" height="1" fill="#646064"/><rect x="10" y="92.6" width="2" height="1" fill="#646064"/><rect x="10" y="96.3" width="2" height="1" fill="#646064"/><rect x="10" y="100.0" width="2" height="1" fill="#646064"/><rect x="8" y="103.6" width="4" height="1" fill="#646064"/><rect x="10" y="107.3" width="2" height="1" fill="#646064"/><rect x="10" y="110.9" width="2" height="1" fill="#646064"/><rect x="10" y="114.6" width="2" height="1" fill="#646064"/><rect x="10" y="118.3" width="2" height="1" fill="#646064"/><rect x="2" y="121.9" width="11" height="1" fill="#656165"/><rect x="10" y="125.6" width="2" height="1" fill="#646064"/><rect x="10" y="129.3" width="2" height="1" fill="#646064"/><rect x="10" y="132.9" width="2" height="1" fill="#646064"/><rect x="10" y="136.6" width="2" height="1" fill="#646064"/><rect x="8" y="140.2" width="4" height="1" fill="#646064"/><rect x="10" y="143.9" width="2" height="1" fill="#646064"/><rect x="10" y="147.6" width="2" height="1" fill="#646064"/><rect x="10" y="151.2" width="2" height="1" fill="#646064"/><rect x="10" y="154.9" width="2" height="1" fill="#646064"/><rect x="2" y="158.6" width="11" height="1" fill="#656165"/><rect x="10" y="162.2" width="2" height="1" fill="#646064"/><rect x="10" y="165.9" width="2" height="1" fill="#646064"/><rect x="10" y="169.5" width="2" height="1" fill="#646064"/><rect x="10" y="173.2" width="2" height="1" fill="#646064"/><rect x="8" y="176.9" width="4" height="1" fill="#646064"/><rect x="10" y="180.5" width="2" height="1" fill="#646064"/><rect x="10" y="184.2" width="2" height="1" fill="#646064"/><rect x="10" y="187.9" width="2" height="1" fill="#646064"/><rect x="10" y="191.5" width="2" height="1" fill="#646064"/><rect x="2" y="195.2" width="11" height="1" fill="#656165"/><rect x="10" y="198.9" width="2" height="1" fill="#646064"/><rect x="10" y="202.5" width="2" height="1" fill="#646064"/><rect x="10" y="206.2" width="2" height="1" fill="#646064"/><rect x="10" y="209.8" width="2" height="1" fill="#646064"/><rect x="8" y="213.5" width="4" height="1" fill="#646064"/><rect x="10" y="217.2" width="2" height="1" fill="#646064"/><rect x="10" y="220.8" width="2" height="1" fill="#646064"/><rect x="10" y="224.5" width="2" height="1" fill="#646064"/><rect x="10" y="228.2" width="2" height="1" fill="#646064"/><rect x="2" y="231.8" width="11" height="1" fill="#656165"/><rect x="10" y="235.5" width="2" height="1" fill="#646064"/><rect x="10" y="239.1" width="2" height="1" fill="#646064"/><rect x="10" y="242.8" width="2" height="1" fill="#646064"/><rect x="10" y="246.5" width="2" height="1" fill="#646064"/><rect x="8" y="250.1" width="4" height="1" fill="#646064"/><rect x="10" y="253.8" width="2" height="1" fill="#646064"/><rect x="10" y="257.5" width="2" height="1" fill="#646064"/><rect x="10" y="261.1" width="2" height="1" fill="#646064"/><rect x="10" y="264.8" width="2" height="1" fill="#646064"/><rect x="2" y="268.5" width="11" height="1" fill="#656165"/><rect x="10" y="272.1" width="2" height="1" fill="#646064"/><rect x="10" y="275.8" width="2" height="1" fill="#646064"/><rect x="10" y="279.4" width="2" height="1" fill="#646064"/><rect x="10" y="283.1" width="2" height="1" fill="#646064"/><rect x="8" y="286.8" width="4" height="1" fill="#646064"/><rect x="10" y="290.4" width="2" height="1" fill="#646064"/><rect x="10" y="294.1" width="2" height="1" fill="#646064"/><rect x="10" y="297.8" width="2" height="1" fill="#646064"/><rect x="10" y="301.4" width="2" height="1" fill="#646064"/><rect x="2" y="305.1" width="11" height="1" fill="#656165"/><rect x="10" y="308.7" width="2" height="1" fill="#646064"/><rect x="10" y="312.4" width="2" height="1" fill="#646064"/><rect x="10" y="316.1" width="2" height="1" fill="#646064"/><rect x="10" y="319.7" width="2" height="1" fill="#646064"/><rect x="8" y="323.4" width="4" height="1" fill="#646064"/><rect x="10" y="327.1" width="2" height="1" fill="#646064"/><rect x="10" y="330.7" width="2" height="1" fill="#646064"/><rect x="10" y="334.4" width="2" height="1" fill="#646064"/><rect x="10" y="338.0" width="2" height="1" fill="#646064"/><rect x="2" y="341.7" width="11" height="1" fill="#656165"/><rect x="10" y="345.4" width="2" height="1" fill="#646064"/><rect x="10" y="349.0" width="2" height="1" fill="#646064"/><rect x="10" y="352.7" width="2" height="1" fill="#646064"/><rect x="10" y="356.4" width="2" height="1" fill="#646064"/><rect x="8" y="360.0" width="4" height="1" fill="#646064"/><rect x="10" y="363.7" width="2" height="1" fill="#646064"/><rect x="10" y="367.4" width="2" height="1" fill="#646064"/><rect x="10" y="371.0" width="2" height="1" fill="#646064"/></svg>
<span class="a" style="left:31px;top:94.0px;width:7px;height:6px;font-size:7.5px;line-height:6px;color:#d2cfd2;text-align:center;">1</span>
<span class="a" style="left:31px;top:101.2px;width:7px;height:6px;font-size:7.5px;line-height:6px;color:#d2cfd2;text-align:center;">0</span>
<span class="a" style="left:31px;top:108.4px;width:7px;height:6px;font-size:7.5px;line-height:6px;color:#d2cfd2;text-align:center;">0</span>
<span class="a" style="left:31px;top:130.7px;width:7px;height:6px;font-size:7.5px;line-height:6px;color:#d2cfd2;text-align:center;">5</span>
<span class="a" style="left:31px;top:137.9px;width:7px;height:6px;font-size:7.5px;line-height:6px;color:#d2cfd2;text-align:center;">0</span>
<span class="a" style="left:31px;top:167.3px;width:7px;height:6px;font-size:7.5px;line-height:6px;color:#d2cfd2;text-align:center;transform:rotate(90deg)">0</span>
<span class="a" style="left:31px;top:203.9px;width:7px;height:6px;font-size:7.5px;line-height:6px;color:#d2cfd2;text-align:center;transform:rotate(90deg)">5</span>
<span class="a" style="left:31px;top:210.3px;width:7px;height:6px;font-size:7.5px;line-height:6px;color:#d2cfd2;text-align:center;transform:rotate(90deg)">0</span>
<span class="a" style="left:31px;top:240.6px;width:7px;height:6px;font-size:7.5px;line-height:6px;color:#d2cfd2;text-align:center;transform:rotate(90deg)">1</span>
<span class="a" style="left:31px;top:247.0px;width:7px;height:6px;font-size:7.5px;line-height:6px;color:#d2cfd2;text-align:center;transform:rotate(90deg)">0</span>
<span class="a" style="left:31px;top:253.4px;width:7px;height:6px;font-size:7.5px;line-height:6px;color:#d2cfd2;text-align:center;transform:rotate(90deg)">0</span>
<span class="a" style="left:31px;top:277.2px;width:7px;height:6px;font-size:7.5px;line-height:6px;color:#d2cfd2;text-align:center;transform:rotate(90deg)">1</span>
<span class="a" style="left:31px;top:283.6px;width:7px;height:6px;font-size:7.5px;line-height:6px;color:#d2cfd2;text-align:center;transform:rotate(90deg)">5</span>
<span class="a" style="left:31px;top:290.0px;width:7px;height:6px;font-size:7.5px;line-height:6px;color:#d2cfd2;text-align:center;transform:rotate(90deg)">0</span>
<span class="a" style="left:31px;top:313.8px;width:7px;height:6px;font-size:7.5px;line-height:6px;color:#d2cfd2;text-align:center;transform:rotate(90deg)">2</span>
<span class="a" style="left:31px;top:320.2px;width:7px;height:6px;font-size:7.5px;line-height:6px;color:#d2cfd2;text-align:center;transform:rotate(90deg)">0</span>
<span class="a" style="left:31px;top:326.6px;width:7px;height:6px;font-size:7.5px;line-height:6px;color:#d2cfd2;text-align:center;transform:rotate(90deg)">0</span>
<span class="a" style="left:31px;top:350.5px;width:7px;height:6px;font-size:7.5px;line-height:6px;color:#d2cfd2;text-align:center;transform:rotate(90deg)">2</span>
<span class="a" style="left:31px;top:356.9px;width:7px;height:6px;font-size:7.5px;line-height:6px;color:#d2cfd2;text-align:center;transform:rotate(90deg)">5</span>
<span class="a" style="left:31px;top:363.3px;width:7px;height:6px;font-size:7.5px;line-height:6px;color:#d2cfd2;text-align:center;transform:rotate(90deg)">0</span>
<span class="a" style="left:31px;top:387.1px;width:7px;height:6px;font-size:7.5px;line-height:6px;color:#d2cfd2;text-align:center;transform:rotate(90deg)">3</span>
<span class="a" style="left:31px;top:393.5px;width:7px;height:6px;font-size:7.5px;line-height:6px;color:#d2cfd2;text-align:center;transform:rotate(90deg)">0</span>
<span class="a" style="left:31px;top:399.9px;width:7px;height:6px;font-size:7.5px;line-height:6px;color:#d2cfd2;text-align:center;transform:rotate(90deg)">0</span>
<span class="a" style="left:31px;top:423.7px;width:7px;height:6px;font-size:7.5px;line-height:6px;color:#d2cfd2;text-align:center;transform:rotate(90deg)">3</span>
<span class="a" style="left:31px;top:430.1px;width:7px;height:6px;font-size:7.5px;line-height:6px;color:#d2cfd2;text-align:center;transform:rotate(90deg)">5</span>
<span class="a" style="left:31px;top:436.5px;width:7px;height:6px;font-size:7.5px;line-height:6px;color:#d2cfd2;text-align:center;transform:rotate(90deg)">0</span>
<div class="a" style="left:660px;top:67px;width:1px;height:12px;background:#bdbabd;"></div>
<div class="a" style="left:789px;top:45px;width:211px;height:10px;background:#3f3b3f;"></div>
<svg class="a" style="left:808px;top:48px;" width="7" height="5" viewBox="0 0 7 5"><path d="M2.5 0L0 2.5L2.5 5ZM6 0L3.5 2.5L6 5Z" fill="#cfcccf"/></svg>
<svg class="a" style="left:989px;top:48px;" width="7" height="5" viewBox="0 0 7 5"><path d="M0 0L2.5 2.5L0 5ZM3.5 0L6 2.5L3.5 5Z" fill="#cfcccf"/></svg>
<div class="a" style="left:789px;top:55px;width:3px;height:396px;background:#403c40;"></div>
<div class="a" style="left:792px;top:55px;width:26px;height:396px;background:#545055;"></div>
<div class="a" style="left:791px;top:54px;width:27px;height:1px;background:#48444a;"></div>
<div class="a" style="left:791px;top:104px;width:27px;height:1px;background:#48444a;"></div>
<div class="a" style="left:791px;top:135px;width:27px;height:1px;background:#48444a;"></div>
<div class="a" style="left:791px;top:165px;width:27px;height:1px;background:#48444a;"></div>
<div class="a" style="left:791px;top:216px;width:27px;height:1px;background:#48444a;"></div>
<div class="a" style="left:818px;top:55px;width:2px;height:396px;background:#3f3b3f;"></div>
<svg class="a" style="left:799px;top:66px;" width="13" height="13" viewBox="0 0 13 13"><rect x="2" y="0.5" width="4" height="3" fill="none" stroke="#e0dde0"/><rect x="2" y="4.5" width="4" height="3" fill="none" stroke="#e0dde0"/><rect x="2" y="8.5" width="4" height="3.5" fill="#e0dde0"/><path d="M8 2.5H10.5A3 3 0 0 1 9 11" fill="none" stroke="#e0dde0" stroke-width="1.3"/><path d="M7 1L9.5 3.5L7 5Z" fill="#e0dde0"/></svg>
<svg class="a" style="left:800px;top:87px;" width="11" height="12" viewBox="0 0 11 12"><path d="M1 1L10 6L1 11Z" fill="#e0dde0"/></svg>
<svg class="a" style="left:798px;top:115px;" width="14" height="14" viewBox="0 0 14 14"><g stroke="#e0dde0" stroke-width="1.2"><path d="M7 0V14M0 7H14M2 2L12 12M12 2L2 12"/></g><circle cx="7" cy="7" r="3.3" fill="none" stroke="#e0dde0" stroke-width="1.3"/><circle cx="7" cy="7" r="1.3" fill="#e0dde0"/></svg>
<svg class="a" style="left:798px;top:144px;" width="15" height="15" viewBox="0 0 15 15"><path d="M1 2.5L3 0.5L9 9L7 11Z" fill="none" stroke="#e0dde0" stroke-width="1.1"/><rect x="6.5" y="7" width="7" height="7" fill="none" stroke="#e0dde0" stroke-width="1.1"/></svg>
<svg class="a" style="left:799px;top:173px;" width="13" height="16" viewBox="0 0 13 16"><rect x="3" y="8" width="7" height="7" fill="#e0dde0"/><path d="M4 8L2 1.5M6.5 8V0.5M9 8L11 2" stroke="#e0dde0" stroke-width="1.5"/><ellipse cx="2" cy="2.5" rx="1.5" ry="2.5" fill="#e0dde0"/><ellipse cx="11" cy="2.5" rx="1.5" ry="2.5" fill="#e0dde0"/></svg>
<svg class="a" style="left:797px;top:195px;" width="16" height="14" viewBox="0 0 16 14"><path d="M1 3H15M1 11H15" stroke="#e0dde0" stroke-width="1.3"/><path d="M4 1A2.5 2.5 0 0 1 4 5L7 3Z" fill="#e0dde0"/><ellipse cx="5" cy="3" rx="2.5" ry="2.2" fill="#e0dde0"/><path d="M10 8.5L14 11L10 13.5Z" fill="#e0dde0"/><circle cx="11.5" cy="11" r="2.5" fill="#e0dde0"/></svg>
<svg class="a" style="left:798px;top:224px;" width="15" height="15" viewBox="0 0 15 15"><circle cx="7.5" cy="7.5" r="6.3" fill="none" stroke="#e0dde0" stroke-width="1.3"/><rect x="6.7" y="6.2" width="1.7" height="5" fill="#e0dde0"/><circle cx="7.5" cy="4.2" r="1" fill="#e0dde0"/></svg>
<div class="a" style="left:821px;top:55px;width:179px;height:19px;background:#3f3b3f;"></div>
<div class="a" style="left:821px;top:55px;width:32px;height:19px;background:#48444a;"></div>
<div class="a" style="left:854px;top:55px;width:29px;height:19px;background:#48444a;"></div>
<div class="a" style="left:883px;top:55px;width:32px;height:19px;background:#535054;"></div>
<span class="t" style="left:828px;top:60px;color:#b8b5b8">颜色</span>
<span class="t" style="left:860px;top:60px;color:#b8b5b8">色板</span>
<span class="t" style="left:890px;top:60px;color:#f0edf0">调整</span>
<div class="a" style="left:987px;top:62px;width:9px;height:6px;background:#8a868a;"></div>
<div class="a" style="left:821px;top:74px;width:179px;height:84px;background:#535054;"></div>
<span class="t" style="left:828px;top:82px;color:#e2dfe2">添加调整</span>
<div class="a" style="left:866px;top:98px;width:11px;height:3px;background:#cfcccf;"></div>
<div class="a" style="left:882px;top:98px;width:11px;height:3px;background:#cfcccf;"></div>
<div class="a" style="left:898px;top:98px;width:11px;height:3px;background:#cfcccf;"></div>
<div class="a" style="left:914px;top:98px;width:11px;height:3px;background:#cfcccf;"></div>
<div class="a" style="left:930px;top:98px;width:11px;height:3px;background:#cfcccf;"></div>
<div class="a" style="left:946px;top:98px;width:11px;height:3px;background:#cfcccf;"></div>
<svg class="a" style="left:848px;top:119px;" width="13" height="11" viewBox="0 0 13 11"><rect x="0.5" y="0.5" width="11" height="9" fill="none" stroke="#d8d5d8"/><path d="M2 6H10" stroke="#d8d5d8" stroke-width="2"/><path d="M2 2V5M5 2V5M8 2V5" stroke="#d8d5d8" stroke-width="1.2"/></svg>
<svg class="a" style="left:864px;top:118px;" width="13" height="11" viewBox="0 0 13 11"><circle cx="3.5" cy="7" r="3" fill="none" stroke="#d8d5d8" stroke-width="1.2"/><circle cx="10" cy="7" r="3" fill="none" stroke="#d8d5d8" stroke-width="1.2"/><path d="M3.5 3L6.5 1L10 3" fill="none" stroke="#d8d5d8"/></svg>
<svg class="a" style="left:883px;top:119px;" width="13" height="11" viewBox="0 0 13 11"><rect x="0.5" y="0.5" width="11" height="9" fill="none" stroke="#d8d5d8"/><rect x="1" y="1" width="5" height="8" fill="#2a272a"/><rect x="6" y="1" width="5" height="8" fill="#eeeeee"/></svg>
<svg class="a" style="left:899px;top:118px;" width="13" height="11" viewBox="0 0 13 11"><rect x="0.5" y="2.5" width="10" height="7" rx="1" fill="#d8d5d8"/><circle cx="5.5" cy="6" r="2.2" fill="#535054"/><circle cx="10.5" cy="9" r="2.2" fill="#535054" stroke="#d8d5d8"/></svg>
<svg class="a" style="left:918px;top:118px;" width="13" height="11" viewBox="0 0 13 11"><circle cx="4.5" cy="5" r="4" fill="#aaa7aa"/><circle cx="8" cy="5" r="4" fill="#8f8c8f"/><circle cx="6.2" cy="8" r="3.5" fill="#d0cdd0"/></svg>
<svg class="a" style="left:935px;top:118px;" width="13" height="11" viewBox="0 0 13 11"><path d="M0.5 0.5H11.5V10.5H0.5ZM4 0.5V10.5M8 0.5V10.5M0.5 4H11.5M0.5 7H11.5" fill="none" stroke="#d8d5d8"/></svg>
<svg class="a" style="left:856px;top:138px;" width="12" height="11" viewBox="0 0 12 11"><rect x="0.5" y="0.5" width="11" height="10" fill="#2e2b2e" stroke="#dcd9dc"/><path d="M2 9C5 8 7 3 10 2" stroke="#eee" stroke-width="1.6" fill="none"/></svg>
<svg class="a" style="left:874px;top:138px;" width="12" height="11" viewBox="0 0 12 11"><defs><linearGradient id="r31" x1="0" y1="1" x2="1" y2="0"><stop offset="0" stop-color="#555"/><stop offset="0.5" stop-color="#ddd"/><stop offset="1" stop-color="#555"/></linearGradient></defs><rect x="0.5" y="0.5" width="11" height="10" fill="url(#r31)" stroke="#dcd9dc"/></svg>
<svg class="a" style="left:891px;top:138px;" width="12" height="11" viewBox="0 0 12 11"><rect x="0.5" y="0.5" width="11" height="10" fill="#444" stroke="#dcd9dc"/><path d="M1 9L4 6L6 7L11 2" stroke="#eee" stroke-width="1.6" fill="none"/></svg>
<svg class="a" style="left:908px;top:138px;" width="12" height="11" viewBox="0 0 12 11"><rect x="0.5" y="0.5" width="11" height="10" fill="#999" stroke="#dcd9dc"/><path d="M0.5 0.5L6 6L11.5 0.5M0.5 10.5L6 6L11.5 10.5" fill="#555"/></svg>
<svg class="a" style="left:926px;top:138px;" width="12" height="11" viewBox="0 0 12 11"><defs><linearGradient id="r35" x1="0" x2="1"><stop offset="0" stop-color="#111"/><stop offset="1" stop-color="#eee"/></linearGradient></defs><rect x="0.5" y="0.5" width="11" height="10" fill="url(#r35)" stroke="#dcd9dc"/></svg>
<div class="a" style="left:821px;top:157px;width:179px;height:2px;background:#3f3b3f;"></div>
<div class="a" style="left:821px;top:159px;width:179px;height:21px;background:#3f3b3f;"></div>
<div class="a" style="left:821px;top:159px;width:31px;height:21px;background:#535054;"></div>
<div class="a" style="left:852px;top:159px;width:30px;height:21px;background:#48444a;"></div>
<div class="a" style="left:883px;top:159px;width:30px;height:21px;background:#48444a;"></div>
<span class="t" style="left:827px;top:164px;color:#f0edf0">图层</span>
<span class="t" style="left:859px;top:164px;color:#b8b5b8">通道</span>
<span class="t" style="left:890px;top:164px;color:#b8b5b8">路径</span>
<div class="a" style="left:987px;top:167px;width:9px;height:6px;background:#8a868a;"></div>
<div class="a" style="left:821px;top:180px;width:179px;height:271px;background:#524e53;"></div>
<div class="a" style="left:824px;top:185px;width:63px;height:14px;background:#444045;"></div>
<svg class="a" style="left:827px;top:188px;" width="8" height="8" viewBox="0 0 8 8"><circle cx="4.8" cy="3.2" r="2.5" fill="none" stroke="#dcd9dc" stroke-width="1.1"/><path d="M3 5L0.8 7.3" stroke="#dcd9dc" stroke-width="1.3"/></svg>
<span class="t" style="left:838px;top:187px;color:#e2dfe2">类型</span>
<svg class="a" style="left:877px;top:190px;" width="6" height="4" viewBox="0 0 6 4"><path d="M0.5 0.5L3 3L5.5 0.5" fill="none" stroke="#bdbabd" stroke-width="1"/></svg>
<svg class="a" style="left:898px;top:188px;" width="11" height="10" viewBox="0 0 11 10"><rect x="0.5" y="0.5" width="10" height="8" fill="none" stroke="#dcd9dc"/><path d="M2 7L4.5 4L6 5.5L7.5 4L9 7Z" fill="#dcd9dc"/></svg>
<svg class="a" style="left:917px;top:187px;" width="10" height="10" viewBox="0 0 10 10"><circle cx="5" cy="5" r="4.5" fill="#dcd9dc"/><path d="M5 0.5A4.5 4.5 0 0 0 5 9.5Z" fill="#535054" transform="rotate(45 5 5)"/></svg>
<span class="t" style="left:935px;top:185px;font-family:'Liberation Serif',serif;font-size:12px;font-weight:bold;color:#dcd9dc">T</span>
<svg class="a" style="left:953px;top:188px;" width="10" height="10" viewBox="0 0 10 10"><rect x="1.5" y="1.5" width="7" height="7" fill="none" stroke="#dcd9dc" stroke-width="1.2"/><rect x="0" y="0" width="3" height="3" fill="#dcd9dc"/><rect x="7" y="0" width="3" height="3" fill="#dcd9dc"/><rect x="0" y="7" width="3" height="3" fill="#dcd9dc"/><rect x="7" y="7" width="3" height="3" fill="#dcd9dc"/></svg>
<svg class="a" style="left:970px;top:187px;" width="10" height="12" viewBox="0 0 10 12"><path d="M1 2H7L9 4V11H1Z" fill="none" stroke="#dcd9dc" stroke-width="1.1"/><rect x="3" y="6" width="5" height="5" fill="#dcd9dc"/></svg>
<svg class="a" style="left:989px;top:185px;" width="9" height="14" viewBox="0 0 9 14"><circle cx="5" cy="4" r="3.5" fill="#e0dde0"/><rect x="4" y="8" width="2" height="6" fill="#5c585c"/></svg>
<div class="a" style="left:824px;top:206px;width:85px;height:14px;background:#444045;"></div>
<span class="t" style="left:830px;top:208px;color:#e2dfe2">正常</span>
<svg class="a" style="left:900px;top:211px;" width="6" height="4" viewBox="0 0 6 4"><path d="M0.5 0.5L3 3L5.5 0.5" fill="none" stroke="#bdbabd" stroke-width="1"/></svg>
<span class="t" style="left:915px;top:208px;">不透明度:</span>
<div class="a" style="left:957px;top:206px;width:29px;height:14px;background:#444045;"></div>
<span class="t" style="left:958px;top:208px;color:#e2dfe2">100%</span>
<div class="a" style="left:986px;top:206px;width:11px;height:14px;background:#444045;"></div>
<svg class="a" style="left:988px;top:211px;" width="6" height="4" viewBox="0 0 6 4"><path d="M0.5 0.5L3 3L5.5 0.5" fill="none" stroke="#bdbabd" stroke-width="1"/></svg>
<span class="t" style="left:825px;top:228px;color:#cfcccf">锁定:</span>
<svg class="a" style="left:850px;top:227px;" width="10" height="10" viewBox="0 0 10 10"><rect x="0.5" y="0.5" width="9" height="9" fill="#dcd9dc"/><rect x="2" y="2" width="2.5" height="2.5" fill="#333"/><rect x="5.5" y="5.5" width="2.5" height="2.5" fill="#333"/><rect x="5.5" y="2" width="2.5" height="2.5" fill="#777"/><rect x="2" y="5.5" width="2.5" height="2.5" fill="#777"/></svg>
<svg class="a" style="left:868px;top:226px;" width="11" height="12" viewBox="0 0 11 12"><path d="M10.5 0.5L4.5 7L6 8.5Z" fill="#dcd9dc"/><path d="M4 7.5C2 8 2 10.5 0.5 11C3 11.5 5.5 11 5.5 9Z" fill="#dcd9dc"/></svg>
<svg class="a" style="left:884px;top:226px;" width="12" height="12" viewBox="0 0 12 12"><path d="M6 1V11M1 6H11" stroke="#dcd9dc" stroke-width="1.2"/><path d="M6 0L4 2.5H8ZM6 12L4 9.5H8ZM0 6L2.5 4V8ZM12 6L9.5 4V8Z" fill="#dcd9dc"/></svg>
<svg class="a" style="left:900px;top:226px;" width="12" height="12" viewBox="0 0 12 12"><path d="M2.5 0V9.5H12M0 2.5H8V8" fill="none" stroke="#dcd9dc" stroke-width="1.1"/><path d="M8 0L11 3" stroke="#dcd9dc"/></svg>
<svg class="a" style="left:919px;top:226px;" width="10" height="12" viewBox="0 0 10 12"><rect x="1" y="5" width="8" height="6.5" fill="#dcd9dc"/><path d="M2.5 5V3.5A2.5 2.5 0 0 1 7.5 3.5V5" fill="none" stroke="#dcd9dc" stroke-width="1.4"/><rect x="4.3" y="7" width="1.4" height="2.5" fill="#535054"/></svg>
<span class="t" style="left:934px;top:228px;color:#cfcccf">填充:</span>
<div class="a" style="left:957px;top:226px;width:29px;height:14px;background:#444045;"></div>
<span class="t" style="left:958px;top:228px;color:#e2dfe2">100%</span>
<div class="a" style="left:986px;top:226px;width:11px;height:14px;background:#444045;"></div>
<svg class="a" style="left:988px;top:231px;" width="6" height="4" viewBox="0 0 6 4"><path d="M0.5 0.5L3 3L5.5 0.5" fill="none" stroke="#bdbabd" stroke-width="1"/></svg>
<div class="a" style="left:821px;top:242px;width:179px;height:1px;background:#3f3b3f;"></div>
<div class="a" style="left:989px;top:243px;width:7px;height:53px;background:#4c484d;"></div>
<div class="a" style="left:822px;top:243px;width:167px;height:25px;background:#524e53;"></div>
<div class="a" style="left:822px;top:267px;width:167px;height:1px;background:#444045;"></div>
<svg class="a" style="left:828px;top:250px;" width="10" height="10" viewBox="0 0 10 10"><path d="M9.5 0.5V9.5H0.5" fill="none" stroke="#5e5a5f"/></svg>
<svg class="a" style="left:846px;top:247px;" width="23" height="17" viewBox="0 0 23 17"><rect width="23" height="17" fill="#f2f2f2"/><g fill="none" stroke="#161616" stroke-width="2.2"><path d="M0 8C4 5 6 9 9 6S14 2 17 4"/><path d="M2 13C5 10 8 14 11 10S16 7 19 9S22 6 23 5"/><path d="M6 17C8 14 12 16 14 13S19 12 23 13"/><path d="M12 1C14 3 18 1 21 3"/><path d="M3 3C5 1 7 3 8 2"/></g><path d="M16 8C18 7 21 8 20 11C19 13 16 12 16 10Z" fill="#161616"/><path d="M4 10C5 9 7 10 6 12Z" fill="#161616"/></svg>
<span class="t" style="left:876px;top:252px;color:#dcd9dc">阈值 1</span>
<div class="a" style="left:822px;top:268px;width:167px;height:24px;background:#6a666b;"></div>
<svg class="a" style="left:825px;top:275px;" width="13" height="10" viewBox="0 0 13 10"><path d="M0.5 5C3 1 10 1 12.5 5C10 9 3 9 0.5 5Z" fill="none" stroke="#e8e5e8" stroke-width="1.2"/><circle cx="6.5" cy="5" r="2.3" fill="#e8e5e8"/></svg>
<svg class="a" style="left:844px;top:269px;" width="26" height="22" viewBox="0 0 26 22"><defs><linearGradient id="tr" x1="0" y1="0" x2="1" y2="0.75"><stop offset="0" stop-color="#ff20ff"/><stop offset="0.2" stop-color="#2030ff"/><stop offset="0.4" stop-color="#10f0ff"/><stop offset="0.6" stop-color="#20f030"/><stop offset="0.8" stop-color="#ffff20"/><stop offset="1" stop-color="#ff2020"/></linearGradient></defs><rect x="0.5" y="0.5" width="25" height="21" fill="#2a272a" stroke="#f0f0f0"/><rect x="2" y="2" width="22" height="18" fill="url(#tr)"/></svg>
<span class="t" style="left:876px;top:274px;color:#f0edf0">图层 1</span>
<div class="a" style="left:705px;top:6px;width:66px;height:31px;background:#2b2b37;border-radius:0 16px 16px 0"></div>
<div class="a" style="left:741px;top:21px;width:27px;height:1px;background:#30303c;"></div>
<svg class="a" style="left:728px;top:10px;" width="7" height="7" viewBox="0 0 7 7"><path d="M3.5 0.5L6.5 3.5H4.5V6.5H2.5V3.5H0.5Z" fill="#5a9ad8"/></svg>
<svg class="a" style="left:728px;top:26px;" width="7" height="7" viewBox="0 0 7 7"><path d="M3.5 6.5L6.5 3.5H4.5V0.5H2.5V3.5H0.5Z" fill="#3aa860"/></svg>
<span class="t" style="left:749px;top:9px;font-size:8.5px;color:#d0d0da"><b>0</b>K/s</span>
<span class="t" style="left:749px;top:24px;font-size:8.5px;color:#d0d0da"><b>0</b>K/s</span>
<svg class="a" style="left:684px;top:0px;" width="42" height="42" viewBox="0 0 42 42"><circle cx="21" cy="21" r="21" fill="#26262f"/><circle cx="21" cy="21" r="19.5" fill="#34344a"/><path d="M21.64 2.71A18.3 18.3 0 0 1 32.14 6.48" fill="none" stroke="#48bea0" stroke-width="1.8"/><path d="M32.01 6.38A18.3 18.3 0 0 1 38.45 15.50" fill="none" stroke="#5ac8a0" stroke-width="1.8"/><path d="M38.40 15.34A18.3 18.3 0 0 1 38.45 26.50" fill="none" stroke="#78d296" stroke-width="1.8"/><path d="M38.50 26.35A18.3 18.3 0 0 1 32.14 35.52" fill="none" stroke="#aad782" stroke-width="1.8"/><path d="M32.27 35.42A18.3 18.3 0 0 1 21.80 39.28" fill="none" stroke="#dcd26e" stroke-width="1.8"/><path d="M21.96 39.27A18.3 18.3 0 0 1 11.17 36.43" fill="none" stroke="#ebbe64" stroke-width="1.8"/><path d="M11.30 36.52A18.3 18.3 0 0 1 4.09 28.00" fill="none" stroke="#e6965a" stroke-width="1.8"/><path d="M4.15 28.15A18.3 18.3 0 0 1 3.13 17.04" fill="none" stroke="#dc6e50" stroke-width="1.8"/></svg>
<span class="t" style="left:693px;top:11px;font-size:17px;line-height:20px;color:#e6e6ee;font-weight:normal">78</span>
<span class="t" style="left:713px;top:20px;font-size:7px;line-height:9px;color:#e6e6ee">%</span>
<div class="a" style="left:880px;top:28px;width:74px;height:28px;border-radius:0 14px 14px 0;background:linear-gradient(#f6f6f6,#e4e4e4);box-shadow:0 1px 2px rgba(0,0,0,0.4)"></div>
<svg class="a" style="left:899px;top:33px;" width="6" height="7" viewBox="0 0 6 7"><path d="M3 0L6 3H4V7H2V3H0Z" fill="#d88068"/></svg>
<svg class="a" style="left:899px;top:44px;" width="6" height="7" viewBox="0 0 6 7"><path d="M3 7L6 4H4V0H2V4H0Z" fill="#4a8a64"/></svg>
<span class="t" style="left:919px;top:31px;font-size:8px;line-height:10px;color:#1e1e1e">0K/s</span>
<span class="t" style="left:919px;top:42px;font-size:8px;line-height:10px;color:#1e1e1e">0K/s</span>
<svg class="a" style="left:936px;top:34px;" width="14" height="14" viewBox="0 0 14 14"><circle cx="7" cy="7" r="6.5" fill="#3b7ed6"/><path d="M7 3.5V10.5M3.5 7H10.5" stroke="#fff" stroke-width="1.8"/></svg>
<svg class="a" style="left:861px;top:22px;" width="36" height="36" viewBox="0 0 36 36"><defs><clipPath id="gc"><circle cx="18" cy="18" r="16"/></clipPath></defs><circle cx="18" cy="18" r="17.5" fill="#c8ecd0"/><circle cx="18" cy="18" r="16" fill="#3cc45c"/><rect x="0" y="0" width="36" height="10" fill="#2c9a4a" clip-path="url(#gc)"/><rect x="15.5" y="5.5" width="5" height="2" rx="1" fill="#b8e0c0"/></svg>
<span class="t" style="left:867px;top:34px;font-size:11.5px;line-height:13px;color:#e0f4e4">78%</span>
<div class="a" style="left:864px;top:101px;width:134px;height:17px;background:#f8f8f8;"></div>
<svg class="a" style="left:844px;top:97px;" width="24" height="23" viewBox="0 0 24 23"><rect x="2" y="2" width="19" height="19" rx="4" fill="#e8542a" transform="rotate(-12 11.5 11.5)"/><path d="M16 7.5C14 6 8 6 7.5 9C7 12 15 11 15 14C15 17 9 17 6.5 15.5" fill="none" stroke="#fff" stroke-width="2.8" stroke-linecap="round"/></svg>
<span class="t" style="left:870px;top:103px;font-size:11px;line-height:13px;color:#2c70c4;font-weight:bold">英</span>
<svg class="a" style="left:887px;top:103px;" width="11" height="12" viewBox="0 0 11 12"><defs><mask id="mm"><rect width="11" height="12" fill="#fff"/><circle cx="8.3" cy="3.3" r="4.6" fill="#000"/></mask></defs><circle cx="5.3" cy="6.5" r="5.2" fill="#2c70c4" mask="url(#mm)"/></svg>
<svg class="a" style="left:905px;top:105px;" width="8" height="10" viewBox="0 0 8 10"><circle cx="2" cy="3" r="1.2" fill="#2c70c4"/><path d="M6 5C7 6 6.5 8 5 9" stroke="#2c70c4" stroke-width="1.3" fill="none"/></svg>
<svg class="a" style="left:920px;top:103px;" width="9" height="13" viewBox="0 0 9 13"><rect x="2.5" y="0.5" width="4" height="7" rx="2" fill="#2c70c4"/><path d="M0.8 5A3.7 3.7 0 0 0 8.2 5M4.5 9V12M2.5 12.5H6.5" fill="none" stroke="#2c70c4" stroke-width="1.2"/></svg>
<svg class="a" style="left:935px;top:104px;" width="12" height="10" viewBox="0 0 12 10"><rect x="0.7" y="0.7" width="10.6" height="8.6" fill="none" stroke="#2c70c4" stroke-width="1.3"/><path d="M2.5 3.2H9.5M2.5 5.2H9.5" stroke="#2c70c4" stroke-width="1" stroke-dasharray="1 0.8"/><path d="M3 7.3H9" stroke="#2c70c4" stroke-width="1"/></svg>
<svg class="a" style="left:953px;top:103px;" width="12" height="13" viewBox="0 0 12 13"><circle cx="4" cy="2.5" r="2" fill="#c8c8d0"/><path d="M0 6H8V12H0Z" fill="#d0d0d8"/><rect x="6" y="8" width="6" height="4" fill="#e0e0e8"/></svg>
<svg class="a" style="left:968px;top:104px;" width="11" height="11" viewBox="0 0 11 11"><path d="M3.5 0.5L0.5 3L2 5.5L3 5V10.5H8V5L9 5.5L10.5 3L7.5 0.5C7 2 4 2 3.5 0.5Z" fill="#2c70c4"/></svg>
<svg class="a" style="left:984px;top:103px;" width="11" height="12" viewBox="0 0 11 12"><path d="M8.5 0.5A3 3 0 0 0 6 4.5L0.8 9.7L2.3 11.2L7.5 6A3 3 0 0 0 10.8 3.5L9 4.2L7.8 3L8.5 0.5Z" fill="#2c70c4"/></svg>
<svg class="a" style="left:0px;top:0px;left:0;top:0;pointer-events:none" width="1000" height="451" viewBox="0 0 1000 451"><path d="M33 286.5L47.5 289L45.5 291.2L192 382.6L191 384.2L39 297.5L36.5 300Z" fill="#ec3338"/></svg>
</body></html>
